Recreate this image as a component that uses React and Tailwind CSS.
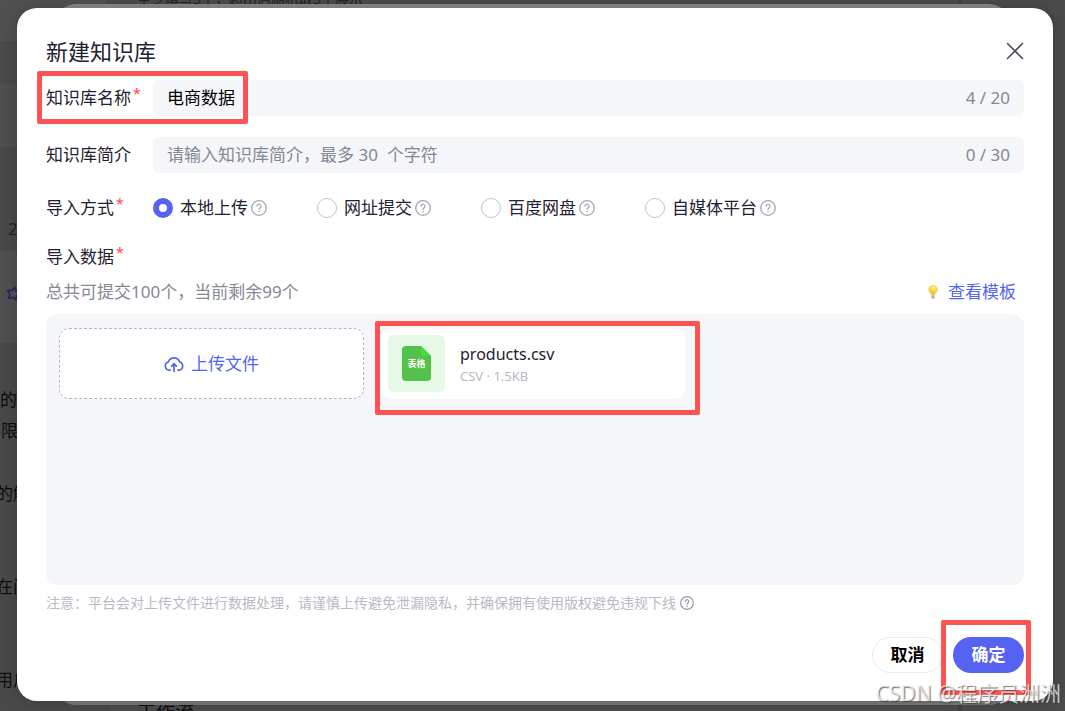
import React, { useState } from 'react';
import { X, Star } from 'lucide-react';

const SOURCES = [
  { id: 'local', label: '本地上传' },
  { id: 'url', label: '网址提交' },
  { id: 'netdisk', label: '百度网盘' },
  { id: 'media', label: '自媒体平台' }
];

function HelpIcon({ className }) {
  return (
    <svg viewBox="0 0 16 16" fill="none" stroke="currentColor" strokeLinecap="round" className={className}>
      <circle cx="8" cy="8" r="7.3" strokeWidth="1.3" />
      <path d="M6 6.200a2 2 0 1 1 3.100 1.700c-.7.45-1.100.8-1.100 1.500" strokeWidth="1.3" />
      <circle cx="8" cy="11.700" r="0.400" fill="currentColor" strokeWidth="0.700" />
    </svg>
  );
}

function UploadIcon({ className }) {
  return (
    <svg viewBox="0 0 20 16" fill="none" stroke="currentColor" strokeWidth="1.7" strokeLinecap="round" className={className}>
      <path d="M6 14.2H5.2A4.2 4.2 0 0 1 4.3 6a6 6 0 0 1 11.4 0 4.2 4.2 0 0 1-.9 8.2H14" />
      <path d="M10 15.2V8M7.6 10.2 10 7.8l2.4 2.4" />
    </svg>
  );
}

function BulbIcon({ className }) {
  return (
    <svg viewBox="0 0 10 14" className={className}>
      <path d="M5 .2A4.7 4.7 0 0 0 .3 4.9C.3 7 2.5 7.9 3 10h4c.5-2.1 2.7-3 2.7-5.1A4.7 4.7 0 0 0 5 .2z" fill="#fcd04b" />
      <ellipse cx="5.4" cy="3.1" rx="2.6" ry="1.9" fill="#fff06a" />
      <path d="M4.2 6.5h1.6L5.5 10h-1z" fill="#f5a83a" />
      <path d="M3.2 10.2h3.6v2.3c0 .9-.7 1.4-1.8 1.4s-1.8-.5-1.8-1.4z" fill="#b4b6bd" />
    </svg>
  );
}

// Highlight frame, placed over the element it marks
function Highlight({ className }) {
  return <div className={`absolute border-[5px] border-[#ff5252] rounded-xs pointer-events-none z-10 ${className}`}></div>;
}

function Required() {
  return <sup className="top-0 align-text-top text-sm leading-4 text-[#ff4a4a] ml-0.5">*</sup>;
}

function TextRow({ id, label, required, value, onChange, placeholder, max, children }) {
  return (
    <div className="relative flex items-center">
      <label htmlFor={id} className="w-[107px] shrink-0">
        {label}
        {required && <Required />}
      </label>
      <div className="flex-1 min-w-0 h-9 flex items-center bg-[#f4f6fa] rounded-md px-[14px]">
        <input
          id={id}
          type="text"
          value={value}
          maxLength={max}
          placeholder={placeholder}
          onChange={(e) => onChange(e.target.value)}
          className="flex-1 min-w-0 bg-transparent text-black placeholder-[#858894] focus:outline-none"
        />
        <span className="text-[#858894]">{value.length} / {max}</span>
      </div>
      {children}
    </div>
  );
}

// Dimmed page that stays behind the dialog
function Backdrop() {
  return (
    <div aria-hidden="true" className="absolute inset-0 overflow-hidden flex bg-[#4b4b4b] text-[#0d0d0f]">
      <div className="w-[107px] shrink-0 flex flex-col whitespace-nowrap">
        <div className="h-[41px] bg-[#505050]"></div>
        <div className="h-[43px] bg-[#4a4a4a]"></div>
        <div className="h-[63px] bg-[#4f4f4f]"></div>
        <div className="h-[104px] bg-[#494949] pt-[70px] pl-2 text-[#262626]">2</div>
        <div className="h-[92px] bg-[#505050] pt-[35px] pl-1.5">
          <Star size={15} strokeWidth={2.5} className="text-[#25236b] rotate-12" />
        </div>
        <div className="flex-1 bg-[#494949] pt-[45px]">
          <div className="h-[31px]">的</div>
          <div className="h-[63px] -ml-4">不限</div>
          <div className="h-[93px] -ml-1">的解</div>
          <div className="h-[93px] -ml-1">在问</div>
          <div className="-ml-1">用户</div>
        </div>
      </div>
      <div className="flex-1 flex flex-col justify-between pl-[29px] border-l border-[#444444]">
        <div className="-mt-[13px] text-sm leading-6 text-[#242424]">至少填写3个，超出后随机取3个展示</div>
        <div className="-mb-[13px] text-[19px]">工作流</div>
      </div>
      <div className="w-[107px] shrink-0 border-l-4 border-[#424242]"></div>
    </div>
  );
}

export default function App() {
  const [name, setName] = useState('电商数据');
  const [intro, setIntro] = useState('');
  const [source, setSource] = useState('local');

  return (
    <div className="relative min-h-screen pl-[17px] pr-3 pt-2 pb-[10px] font-['Noto_Sans','Noto_Sans_CJK_SC',sans-serif] text-[17px] leading-6 text-[#1f2130]">
      <Backdrop />
      <div className="absolute inset-x-[56px] inset-y-1 mb-0.5 rounded-[20px] bg-linear-to-b from-[#8a8a8a] to-[#777777]"></div>

      <section role="dialog" aria-labelledby="dialog-title" className="relative bg-white rounded-[20px] px-[29px] py-7 shadow-[0_0_16px_rgba(0,0,0,0.2)]">
        {/* Header */}
        <div className="flex items-center justify-between mb-[14px]">
          <h2 id="dialog-title" className="text-[22px] leading-[30px]">新建知识库</h2>
          <button aria-label="关闭" className="-mr-1.5 text-[#4a4c58]">
            <X size={30} strokeWidth={1.3} />
          </button>
        </div>

        <form onSubmit={(e) => e.preventDefault()}>
          <div className="flex flex-col gap-[21px]">
            <TextRow id="kb-name" label="知识库名称" required value={name} onChange={setName} max={20}>
              <Highlight className="-left-[9px] -top-[9px] w-[211px] h-[53px]" />
            </TextRow>
            <TextRow
              id="kb-intro"
              label="知识库简介"
              value={intro}
              onChange={setIntro}
              placeholder="请输入知识库简介，最多 30  个字符"
              max={30}
            />
          </div>

          {/* Import method */}
          <div role="radiogroup" aria-labelledby="source-label" className="flex items-center mt-[23px]">
            <span id="source-label" className="w-[107px] shrink-0">导入方式<Required /></span>
            {SOURCES.map((item) => (
              <label key={item.id} className="min-w-[164px] flex items-center whitespace-nowrap">
                <input
                  type="radio"
                  name="source"
                  checked={source === item.id}
                  onChange={() => setSource(item.id)}
                  className="appearance-none size-5 rounded-full bg-white border border-[#c0c3ce] checked:border-[6px] checked:border-[#5562f2] mr-[7px]"
                />
                {item.label}
                <HelpIcon className="size-4 ml-[3px] text-[#a2a7b5]" />
              </label>
            ))}
          </div>

          {/* Import data */}
          <div className="mt-[25px]">导入数据<Required /></div>
          <div className="flex items-center justify-between mt-[11px] pr-2 text-[#858894]">
            <span>总共可提交100个，当前剩余99个</span>
            <a href="#template" className="flex items-center gap-[10px] text-[#5562f2]">
              <BulbIcon className="w-[10px] h-[14px]" />
              查看模板
            </a>
          </div>

          <div className="mt-[10px] h-[271px] rounded-xl bg-[#f4f6fa] px-[13px] py-[14px] flex items-start gap-[17px]">
            <button type="button" className="w-[305px] h-[71px] flex items-center justify-center gap-[7px] bg-white rounded-[10px] border border-dashed border-[#b4b7c1] text-[#5562f2]">
              <UploadIcon className="w-5 h-4" />
              上传文件
            </button>
            <div className="relative w-[304px] h-[71px] flex items-center bg-white rounded-[10px] p-[7px]">
              <div className="size-[57px] rounded-md bg-[#e6f8e6] flex items-center justify-center">
                <div className="relative w-[29px] h-[35px] flex items-center justify-center">
                  <svg viewBox="0 0 29 35" className="absolute inset-0">
                    <path d="M4 0h15l10 10v21a4 4 0 0 1-4 4H4a4 4 0 0 1-4-4V4a4 4 0 0 1 4-4z" fill="#53c24b" />
                    <path d="M19 0l10 10h-7a3 3 0 0 1-3-3z" fill="#3fe03a" />
                  </svg>
                  <span className="relative text-[9px] leading-none font-bold text-white">表格</span>
                </div>
              </div>
              <div className="ml-[15px]">
                <div className="text-base leading-6">products.csv</div>
                <div className="text-[13px] leading-5 text-[#b8bac4]">CSV · 1.5KB</div>
              </div>
              <Highlight className="-left-[6px] -top-[7px] w-[325px] h-[94px]" />
            </div>
          </div>

          <p className="flex items-center gap-1 mt-2 text-sm leading-5 text-[#b8bac4]">
            注意：平台会对上传文件进行数据处理，请谨慎上传避免泄漏隐私，并确保拥有使用版权避免违规下线
            <HelpIcon className="size-[14px] text-[#9499aa]" />
          </p>

          {/* Actions */}
          <div className="flex justify-end gap-[10px] mt-6 font-bold">
            <button type="button" className="w-[71px] h-9 rounded-full border border-[#ebecf0] bg-white text-black">取消</button>
            <div className="relative">
              <button type="submit" className="w-[71px] h-9 rounded-full bg-[#5562f2] text-white">确定</button>
              <Highlight className="-left-3 -top-[17px] w-[90px] h-[75px]" />
            </div>
          </div>
        </form>
      </section>

      <div className="absolute right-1 bottom-1 z-20 text-[21px] leading-7 text-white/70 [text-shadow:1px_1px_1px_rgba(60,60,60,0.7)] pointer-events-none">
        CSDN @程序员洲洲
      </div>
    </div>
  );
}
